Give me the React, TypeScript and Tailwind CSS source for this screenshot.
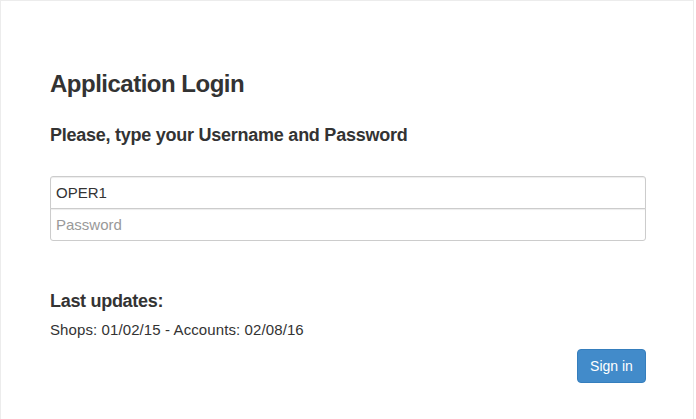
export default function App() {
  return (
    <div className="w-[694px] h-[419px] bg-white border border-b-0 border-[#ececec] box-border flex flex-col pt-[70px] pl-[49px] pr-[47px] text-[#333] font-['Helvetica_Neue','Liberation_Sans',Arial,sans-serif]">
      {/* TITRES */}
      <h3 className="m-0 text-[24px] leading-[26.4px] font-semibold tracking-[-0.5px]">Application Login</h3>
      <h4 className="mt-[29px] text-[18px] leading-[19.8px] font-semibold tracking-[-0.25px]">
        Please, type your Username and Password
      </h4>

      {/* FORMULAIRE */}
      <div className="mt-[30px] flex flex-col">
        <input
          type="text"
          defaultValue="OPER1"
          className="h-[33px] w-full px-[5px] text-[15px] text-[#333] border border-[#ccc] rounded-t-[3px] outline-none shadow-[inset_0_1px_1px_rgba(0,0,0,0.075)]"
        />
        <input
          type="password"
          placeholder="Password"
          className="-mt-px h-[33px] w-full px-[5px] text-[15px] text-[#333] placeholder:text-[#999] border border-[#ccc] rounded-b-[3px] outline-none shadow-[inset_0_1px_1px_rgba(0,0,0,0.075)]"
        />
      </div>

      {/* DERNIÈRES MISES À JOUR */}
      <h4 className="mt-[51px] text-[18px] leading-[19.8px] font-semibold tracking-[-0.3px]">Last updates:</h4>
      <p className="mt-[8px] text-[15px] leading-[20px] tracking-[0.1px]">Shops: 01/02/15 - Accounts: 02/08/16</p>

      <div className="mt-[9px] flex justify-end">
        <button className="h-[34px] w-[69px] bg-[#428bca] border border-[#357ebd] rounded-[4px] text-white text-[14px]">
          Sign in
        </button>
      </div>
    </div>
  );
}
